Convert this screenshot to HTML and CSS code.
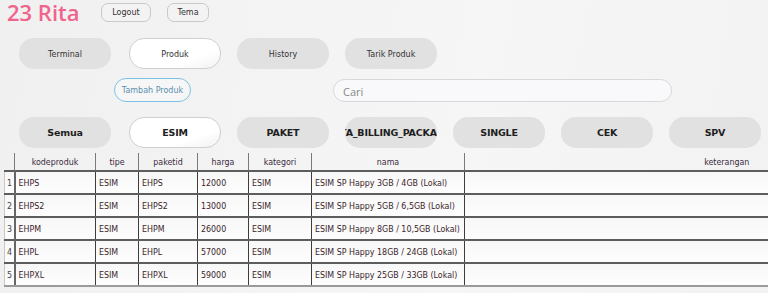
FILE: index.html
```html
<!DOCTYPE html>
<html>
  <head>
    <meta charset="utf-8">
    <title>23 Rita</title>
    <link rel="stylesheet" href="styles.css">
  </head>
  <body>
    <div class="top">
      <div class="title">23 Rita</div>
      <button class="small">Logout</button>
      <button class="small tema">Tema</button>
    </div>

    <div class="pills menu">
      <div class="pill">Terminal</div>
      <div class="pill on">Produk</div>
      <div class="pill">History</div>
      <div class="pill">Tarik Produk</div>
    </div>

    <div class="actions">
      <button class="tambah">Tambah Produk</button>
      <div class="cari">Cari</div>
    </div>

    <div class="pills cats">
      <div class="pill">Semua</div>
      <div class="pill on">ESIM</div>
      <div class="pill">PAKET</div>
      <div class="pill clip"><span>DATA_BILLING_PACKAGE</span></div>
      <div class="pill">SINGLE</div>
      <div class="pill">CEK</div>
      <div class="pill">SPV</div>
    </div>

    <div class="gridwrap">
      <table class="grid">
        <thead>
          <tr>
            <th class="no"></th>
            <th class="c1">kodeproduk</th>
            <th class="c2">tipe</th>
            <th class="c3">paketid</th>
            <th class="c4">harga</th>
            <th class="c5">kategori</th>
            <th class="c6">nama</th>
            <th class="c7">keterangan</th>
          </tr>
        </thead>
        <tbody>
          <tr><td class="no">1</td><td>EHPS</td><td>ESIM</td><td>EHPS</td><td>12000</td><td>ESIM</td><td>ESIM SP Happy 3GB / 4GB (Lokal)</td><td></td></tr>
          <tr><td class="no">2</td><td>EHPS2</td><td>ESIM</td><td>EHPS2</td><td>13000</td><td>ESIM</td><td>ESIM SP Happy 5GB / 6,5GB (Lokal)</td><td></td></tr>
          <tr><td class="no">3</td><td>EHPM</td><td>ESIM</td><td>EHPM</td><td>26000</td><td>ESIM</td><td>ESIM SP Happy 8GB / 10,5GB (Lokal)</td><td></td></tr>
          <tr><td class="no">4</td><td>EHPL</td><td>ESIM</td><td>EHPL</td><td>57000</td><td>ESIM</td><td>ESIM SP Happy 18GB / 24GB (Lokal)</td><td></td></tr>
          <tr><td class="no">5</td><td>EHPXL</td><td>ESIM</td><td>EHPXL</td><td>59000</td><td>ESIM</td><td>ESIM SP Happy 25GB / 33GB (Lokal)</td><td></td></tr>
        </tbody>
      </table>
    </div>
  </body>
</html>
```

FILE: styles.css
```css
*{
  margin: 0;
  padding: 0;
  box-sizing: border-box;
}
body{
  width: 768px;
  height: 293px;
  overflow: hidden;
  background: linear-gradient(100deg, #f0f0f0 0%, #f6f6f6 60%, #f2f2f2 100%);
  font-family: "DejaVu Sans", "Liberation Sans", sans-serif;
  color: #222;
}
button{
  font-family: inherit;
  cursor: pointer;
}

/* top bar */
.top{
  display: flex;
  align-items: center;
  height: 25px;
  padding: 0 0 0 7px;
}
.title{
  width: 94px;
  height: 25px;
  font-family: "Open Sans", sans-serif;
  font-weight: 600;
  font-size: 22px;
  line-height: 25px;
  color: #f0648c;
  white-space: nowrap;
}
.small{
  height: 19px;
  width: 50px;
  font-size: 8px;
  color: #333;
  background: #f3f3f3;
  border: 1px solid #c9c9c9;
  border-radius: 7px;
}
.small.tema{
  width: 42px;
  margin-left: 16px;
}

/* pill rows */
.pills{
  display: flex;
  gap: 16px;
  padding-left: 19px;
}
.pill{
  width: 92px;
  height: 31px;
  flex: none;
  display: flex;
  align-items: center;
  justify-content: center;
  border-radius: 15px;
  background: #e1e1e1;
  font-size: 8px;
  color: #333;
  white-space: nowrap;
  overflow: hidden;
}
.pill:first-child{
  margin-right: 2px;
}
.pill.on{
  background: linear-gradient(160deg, #fff 0%, #fff 70%, #f1f1f1 100%);
  border: 1px solid #cfcfcf;
}
.menu{
  margin-top: 13px;
}
.menu .pill{
  padding-top: 2px;
}
.cats{
  margin-top: 15px;
}
.cats .pill{
  font-family: "DejaVu Sans", sans-serif;
  font-weight: bold;
  font-size: 9.5px;
  letter-spacing: -0.2px;
  color: #1e1e1e;
}
.cats .clip{
  justify-content: flex-start;
}
.cats .clip span{
  margin-left: -19px;
}

/* tambah + cari */
.actions{
  display: flex;
  align-items: center;
  margin-top: 9px;
  padding-left: 114px;
}
.tambah{
  width: 77px;
  height: 24px;
  border: 1px solid #7cc3e3;
  border-radius: 12px;
  background: #f6f6f6;
  color: #5a8fb0;
  font-size: 8px;
  white-space: nowrap;
}
.cari{
  margin-left: 142px;
  width: 339px;
  height: 23px;
  padding: 5px 0 0 9px;
  border: 1px solid #d8d8d8;
  border-radius: 12px;
  background: #f9f9fb;
  font-family: "Open Sans", sans-serif;
  font-size: 11px;
  line-height: 13px;
  color: #888;
}

/* table */
.gridwrap{
  margin: 5px 0 0 4px;
  width: 764px;
  overflow: hidden;
}
.grid{
  border-collapse: collapse;
  table-layout: fixed;
  width: 984px;
  font-family: "DejaVu Sans Condensed", "DejaVu Sans", sans-serif;
  font-size: 8.8px;
}
.grid th{
  height: 18px;
  font-weight: normal;
  color: #3a2a40;
  border-left: 1px solid #7a7a7a;
  text-align: center;
  vertical-align: middle;
}
.grid th.no{
  border-left: none;
}
.grid .no{ width: 10px; }
.grid .c1{ width: 81px; }
.grid .c2{ width: 43px; }
.grid .c3{ width: 59px; }
.grid .c4{ width: 51px; }
.grid .c5{ width: 63px; }
.grid .c6{ width: 153px; }
.grid .c7{ width: 524px; }
.grid td{
  height: 23px;
  padding: 0 0 0 3px;
  border-top: 2px solid #5d5d5d;
  border-left: 1px solid #3d3d3d;
  background: linear-gradient(180deg, #f7f7f7 0%, #fdfdfd 100%);
  color: #3a1e2a;
  white-space: nowrap;
  overflow: hidden;
}
.grid td.no{
  border-left: 1px solid #c8c8c8;
  border-right: 2px solid #666;
  padding: 0 0 0 2px;
  color: #444;
}
.grid tbody tr:last-child td{
  border-bottom: 2px solid #9a9a9a;
}
```
